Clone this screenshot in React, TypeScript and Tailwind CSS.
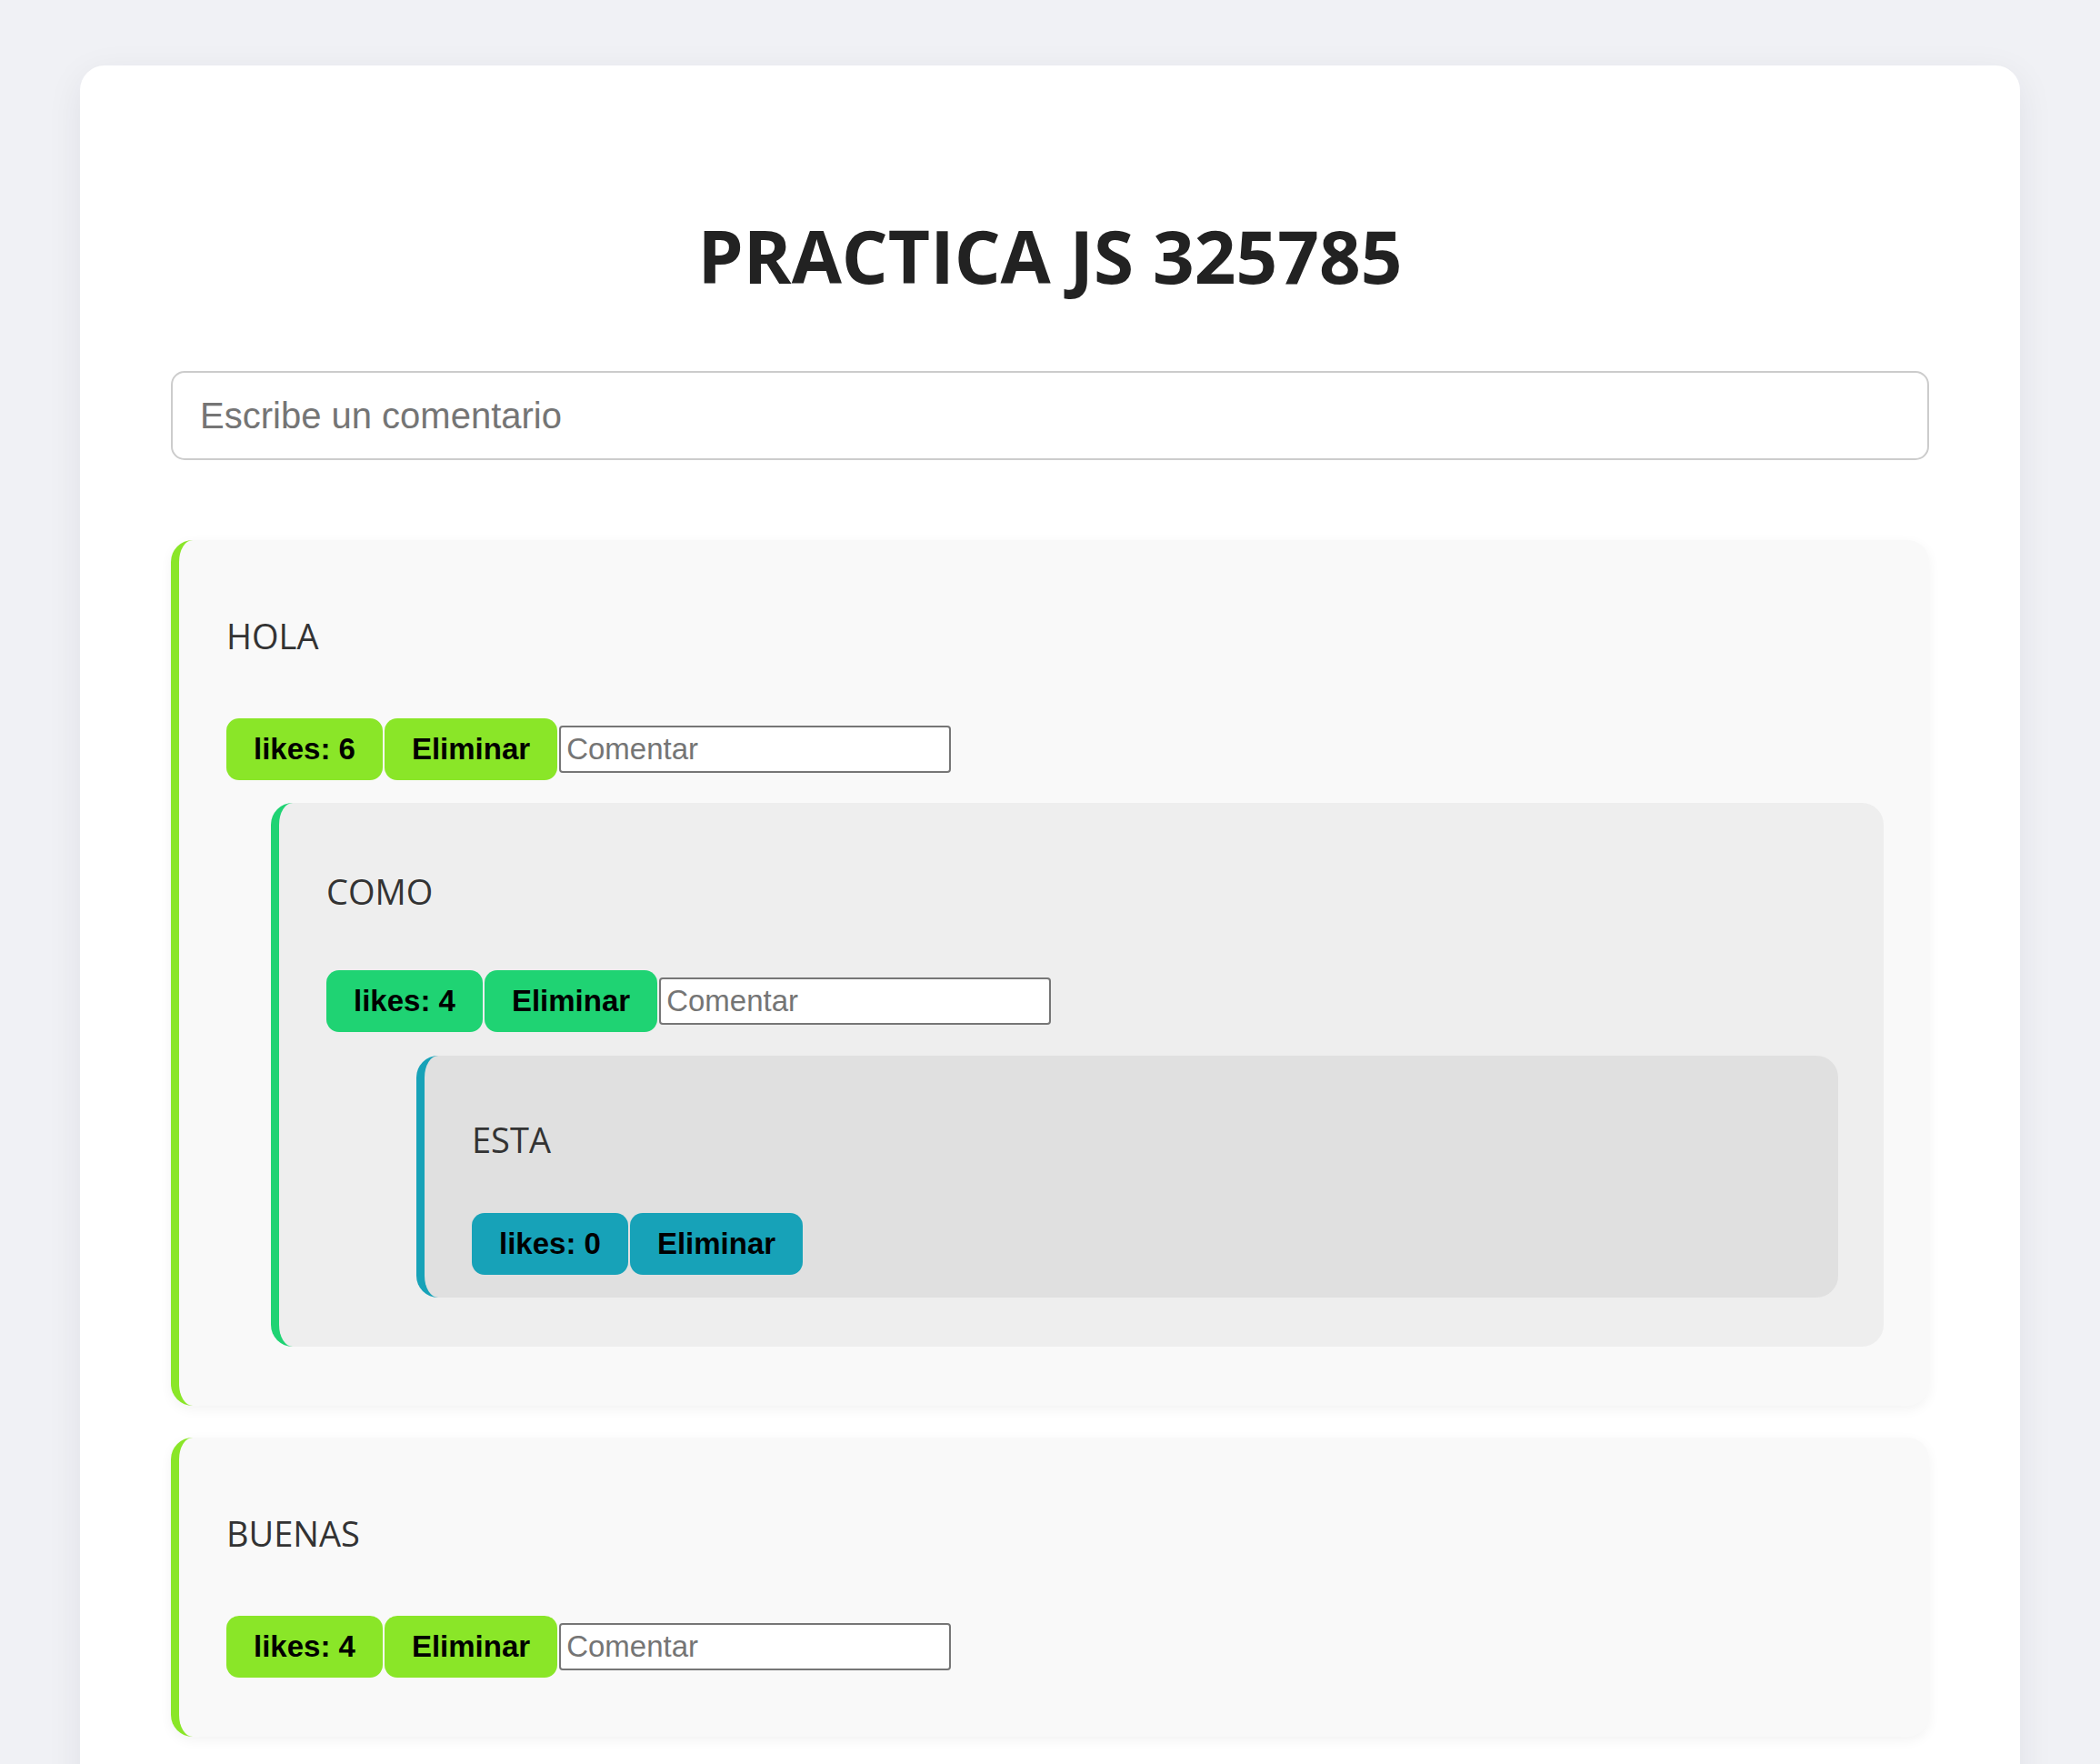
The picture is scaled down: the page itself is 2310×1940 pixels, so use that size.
import { useState } from 'react'

interface Comment {
  id: number
  text: string
  likes: number
  replies: Comment[]
}

const initialComments: Comment[] = [
  {
    id: 1,
    text: 'HOLA',
    likes: 6,
    replies: [
      {
        id: 2,
        text: 'COMO',
        likes: 4,
        replies: [{ id: 3, text: 'ESTA', likes: 0, replies: [] }],
      },
    ],
  },
  { id: 4, text: 'BUENAS', likes: 4, replies: [] },
]

// one entry per nesting level: colours and the spacing measured from the design
const levels = [
  {
    card: 'bg-[#f9f9f9] border-[#8ae628] pt-[81px] shadow-[0_4px_14px_rgba(0,0,0,0.05)]',
    button: 'bg-[#8ae628]',
    actions: 'mt-[67px]',
    replies: 'pb-[40px]',
    child: 'mt-[25px] ml-[49px]',
  },
  {
    card: 'bg-[#eeeeee] border-[#1fd373] pt-[73px]',
    button: 'bg-[#1fd373]',
    actions: 'mt-[63px]',
    replies: 'pb-[29px]',
    child: 'mt-[26px] ml-[99px]',
  },
  {
    card: 'bg-[#e0e0e0] border-[#17a2b8] pt-[68px]',
    button: 'bg-[#17a2b8]',
    actions: 'mt-[57px]',
    replies: '',
    child: '',
  },
]

function CommentCard({ comment, depth }: { comment: Comment; depth: number }) {
  const [likes, setLikes] = useState(comment.likes)
  const level = levels[depth]
  const canReply = depth < 2

  return (
    <div className={`rounded-[24px] border-l-[9px] pl-[52px] pr-[50px] pb-[25px] ${level.card}`}>
      <p className="font-['Open_Sans',sans-serif] text-[38px] leading-[48px] text-[#333333]">
        {comment.text}
      </p>

      <div className={`flex items-center gap-[2px] ${level.actions}`}>
        <button
          onClick={() => setLikes(likes + 1)}
          className={`rounded-[14px] px-[30px] py-[15px] font-['Liberation_Sans',Arial,sans-serif] text-[33px] leading-[38px] font-bold text-black ${level.button}`}
        >
          likes: {likes}
        </button>
        <button
          className={`rounded-[14px] px-[30px] py-[15px] font-['Liberation_Sans',Arial,sans-serif] text-[33px] leading-[38px] font-bold text-black ${level.button}`}
        >
          Eliminar
        </button>
        {canReply && (
          <input
            placeholder="Comentar"
            className="h-[52px] w-[431px] rounded-[4px] border-2 border-[#767676] bg-white pl-[6px] font-['Liberation_Sans',Arial,sans-serif] text-[33px] text-black placeholder:text-[#757575] outline-none"
          />
        )}
      </div>

      {canReply && (
        <div className={level.replies}>
          {comment.replies.map((reply) => (
            <div key={reply.id} className={level.child}>
              <CommentCard comment={reply} depth={depth + 1} />
            </div>
          ))}
        </div>
      )}
    </div>
  )
}

export default function App() {
  const [comments] = useState(initialComments)

  return (
    <div className="min-h-screen bg-[#f0f1f5] pt-[72px]">
      <div className="mx-auto w-[2134px] rounded-[27px] bg-white px-[100px] pt-[161px] pb-[100px] shadow-[0_10px_40px_rgba(30,35,60,0.07)]">
        <h1 className="text-center font-['Open_Sans',sans-serif] text-[80px] leading-[96px] font-bold text-[#222222]">
          PRACTICA JS 325785
        </h1>

        <input
          placeholder="Escribe un comentario"
          className="mt-[79px] block h-[98px] w-full rounded-[15px] border-2 border-[#cccccc] px-[30px] font-['Liberation_Sans',Arial,sans-serif] text-[40px] text-[#333333] placeholder:text-[#757575] outline-none"
        />

        <div className="mt-[88px] flex flex-col gap-[35px]">
          {comments.map((comment) => (
            <CommentCard key={comment.id} comment={comment} depth={0} />
          ))}
        </div>
      </div>
    </div>
  )
}
